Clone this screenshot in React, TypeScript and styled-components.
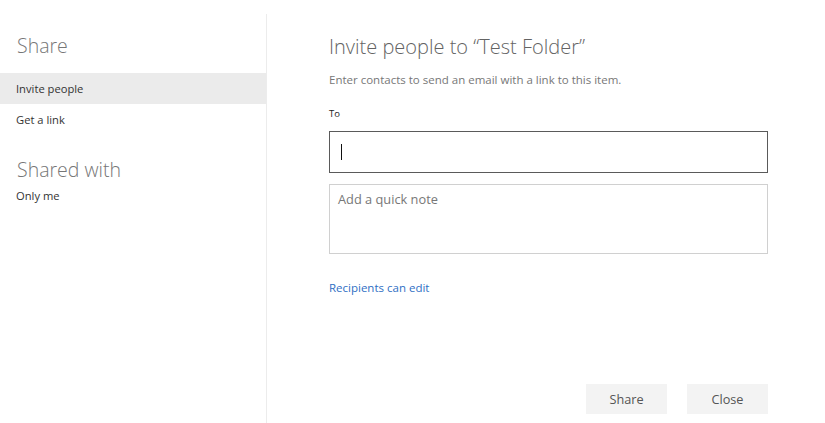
import React from "react";
import styled, { createGlobalStyle } from "styled-components";

const GlobalStyle = createGlobalStyle`
  html, body {
    margin: 0;
    padding: 0;
    background: #fff;
    font-family: "Open Sans", "Segoe UI", Arial, sans-serif;
  }
`;

const Page = styled.div`
  display: flex;
  height: 409px;
  margin-top: 14px;
`;

const Sidebar = styled.aside`
  width: 267px;
  border-right: 1px solid #ececec;
  padding-top: 18px;
  box-sizing: border-box;
`;

const SideTitle = styled.h2<{ $gap?: number }>`
  margin: ${(p) => p.$gap ?? 0}px 0 0;
  padding-left: 17px;
  font-size: 19.5px;
  font-weight: 300;
  line-height: 28px;
  color: #767676;
`;

const NavList = styled.ul`
  list-style: none;
  margin: 13px 0 0;
  padding: 0;
`;

const NavItem = styled.li<{ $active?: boolean }>`
  height: 31px;
  line-height: 31px;
  padding-left: 16px;
  font-size: 11.2px;
  color: #333;
  background: ${(p) => (p.$active ? "#ebebeb" : "transparent")};
`;

const SharedInfo = styled.div`
  margin-top: 4px;
  padding-left: 16px;
  font-size: 11.2px;
  line-height: 16px;
  color: #333;
`;

const Main = styled.main`
  display: flex;
  flex-direction: column;
  padding: 18px 0 9px 62px;
  width: 500px;
  box-sizing: border-box;
`;

const Heading = styled.h1`
  margin: 0;
  font-size: 20px;
  font-weight: 300;
  line-height: 30px;
  color: #636363;
`;

const Hint = styled.p`
  margin: 10px 0 0;
  font-size: 11.5px;
  line-height: 16px;
  color: #777;
`;

const Label = styled.label`
  margin-top: 19px;
  font-size: 9.5px;
  line-height: 14px;
  color: #222;
`;

const ToField = styled.div`
  margin-top: 10px;
  width: 439px;
  height: 42px;
  box-sizing: border-box;
  border: 1px solid #5a5a5a;
  display: flex;
  align-items: center;
  padding-left: 11px;
`;

const Caret = styled.span`
  width: 1px;
  height: 16px;
  background: #111;
`;

const NoteField = styled.div`
  margin-top: 11px;
  width: 439px;
  height: 70px;
  box-sizing: border-box;
  border: 1px solid #d0d0d0;
  padding: 5px 8px;
  font-size: 12.8px;
  line-height: 18px;
  color: #777;
`;

const PermLink = styled.a`
  margin-top: 26px;
  font-size: 11.5px;
  line-height: 16px;
  color: #2f6fc4;
  text-decoration: none;
  cursor: pointer;
`;

const Actions = styled.div`
  margin-top: auto;
  width: 439px;
  display: flex;
  justify-content: flex-end;
  gap: 20px;
`;

const Button = styled.button`
  width: 81px;
  height: 30px;
  border: none;
  background: #f3f3f3;
  font-family: inherit;
  font-size: 12.7px;
  color: #555;
  cursor: pointer;
`;

export default function App() {
  return (
    <>
      <GlobalStyle />
      <Page>
        <Sidebar>
          <SideTitle>Share</SideTitle>
          <NavList>
            <NavItem $active>Invite people</NavItem>
            <NavItem>Get a link</NavItem>
          </NavList>
          <SideTitle $gap={21}>Shared with</SideTitle>
          <SharedInfo>Only me</SharedInfo>
        </Sidebar>
        <Main>
          <Heading>Invite people to “Test Folder”</Heading>
          <Hint>Enter contacts to send an email with a link to this item.</Hint>
          <Label>To</Label>
          <ToField>
            <Caret />
          </ToField>
          <NoteField>Add a quick note</NoteField>
          <PermLink>Recipients can edit</PermLink>
          <Actions>
            <Button>Share</Button>
            <Button>Close</Button>
          </Actions>
        </Main>
      </Page>
    </>
  );
}
